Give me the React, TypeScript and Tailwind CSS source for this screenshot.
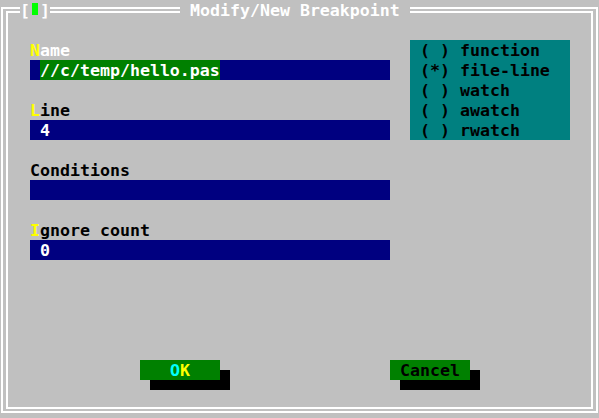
import React from 'react';

const FIELDS = [
  { hot: 'N', rest: 'ame', hotColor: 'text-[#ffff00]', restColor: 'text-white', value: '//c/temp/hello.pas', selected: true },
  { hot: 'L', rest: 'ine', hotColor: 'text-[#ffff00]', restColor: 'text-black', value: '4', selected: false },
  { hot: '', rest: 'Conditions', hotColor: '', restColor: 'text-black', value: '', selected: false },
  { hot: 'I', rest: 'gnore count', hotColor: 'text-[#ffff00]', restColor: 'text-black', value: '0', selected: false },
];

const KINDS = ['function', 'file-line', 'watch', 'awatch', 'rwatch'];

// horizontal double line segment (═) in a 20px tall cell
const DoubleH = ({ w }: { w: string }) => (
  <div className={`${w} h-[20px] shrink-0`}>
    <div className="mt-[7px] h-[6px] border-y-2 border-white" />
  </div>
);

const Field = ({ f }: { f: (typeof FIELDS)[number] }) => (
  <div className="mb-[20px]">
    <div className="h-[20px] leading-[21px] whitespace-pre">
      {f.hot && <span className={f.hotColor}>{f.hot}</span>}
      <span className={f.restColor}>{f.rest}</span>
    </div>
    <div className="h-[20px] leading-[21px] bg-[#000080] text-white whitespace-pre flex">
      <span className="w-[10px]" />
      {f.value && (
        <span className={f.selected ? 'bg-[#008000] h-[20px]' : ''}>{f.value}</span>
      )}
    </div>
  </div>
);

export default function App() {
  return (
    <div
      className="w-[599px] h-[418px] overflow-hidden bg-[#c0c0c0] flex flex-col font-bold text-[16.6px]"
      style={{ fontFamily: '"DejaVu Sans Mono", "Liberation Mono", monospace' }}
    >
      {/* title row */}
      <div className="h-[20px] flex shrink-0 leading-[21px]">
        <div className="w-[10px] shrink-0">
          <div className="ml-[1px] mt-[7px] w-[9px] h-[13px] border-l-2 border-t-2 border-white">
            <div className="ml-[3px] mt-[2px] h-[9px] border-l-2 border-t-2 border-white" />
          </div>
        </div>
        <DoubleH w="w-[10px]" />
        <span className="w-[10px] text-white">[</span>
        <div className="w-[10px] shrink-0">
          <div className="ml-[2px] mt-[3px] w-[6px] h-[12px] bg-[#00ff00]" />
        </div>
        <span className="w-[10px] text-white">]</span>
        <DoubleH w="w-[130px]" />
        <span className="w-[10px]" />
        <span className="w-[210px] text-white whitespace-pre">Modify/New Breakpoint</span>
        <span className="w-[10px]" />
        <DoubleH w="w-[180px]" />
        <div className="w-[9px] shrink-0">
          <div className="mt-[7px] w-[8px] h-[13px] border-r-2 border-t-2 border-white">
            <div className="mt-[2px] w-[3px] h-[11px] border-r-2 border-t-2 border-white" />
          </div>
        </div>
      </div>

      {/* body */}
      <div className="h-[380px] flex shrink-0">
        <div className="w-[10px] shrink-0">
          <div className="ml-[1px] w-[7px] h-full border-x-2 border-white" />
        </div>

        <div className="w-[580px] shrink-0 flex flex-col pt-[20px]">
          <div className="flex">
            <div className="ml-[20px] w-[360px]">
              {FIELDS.map(f => (
                <Field key={f.rest} f={f} />
              ))}
            </div>
            <div className="ml-[20px] w-[160px] h-[100px] bg-[#008080] text-black">
              {KINDS.map(k => (
                <div key={k} className="h-[20px] leading-[21px] whitespace-pre">
                  {` (${k === 'file-line' ? '*' : ' '}) ${k}`}
                </div>
              ))}
            </div>
          </div>

          <div className="flex mt-[80px] ml-[130px] gap-[170px] leading-[21px]">
            <div className="w-[80px] h-[20px] bg-[#008000] text-center shadow-[10px_10px_0_0_#000]">
              <span className="text-[#00ffff]">O</span>
              <span className="text-[#ffff00]">K</span>
            </div>
            <div className="w-[80px] h-[20px] bg-[#008000] text-center text-black shadow-[10px_10px_0_0_#000]">
              Cancel
            </div>
          </div>
        </div>

        <div className="w-[9px] shrink-0">
          <div className="ml-[1px] w-[7px] h-full border-x-2 border-white" />
        </div>
      </div>

      {/* bottom row */}
      <div className="h-[18px] flex shrink-0">
        <div className="w-[10px] shrink-0">
          <div className="ml-[1px] w-[9px] h-[13px] border-l-2 border-b-2 border-white">
            <div className="ml-[3px] h-[9px] border-l-2 border-b-2 border-white" />
          </div>
        </div>
        <div className="w-[580px] shrink-0">
          <div className="mt-[7px] h-[6px] border-y-2 border-white" />
        </div>
        <div className="w-[9px] shrink-0">
          <div className="w-[8px] h-[13px] border-r-2 border-b-2 border-white">
            <div className="w-[3px] h-[9px] border-r-2 border-b-2 border-white" />
          </div>
        </div>
      </div>
    </div>
  );
}
